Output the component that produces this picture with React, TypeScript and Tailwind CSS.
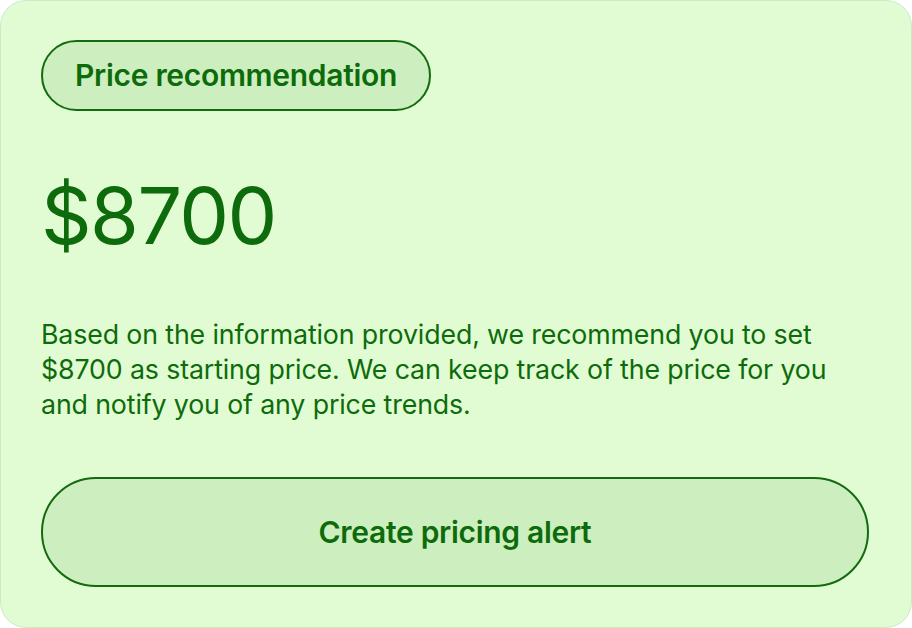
export default function App() {
  return (
    <div className="w-[912px] h-[628px] bg-white" style={{ fontFamily: "Inter, 'Noto Sans', sans-serif" }}>
      <div className="h-full rounded-[26px] border border-[#cfe8c3] bg-[#e1fcd3] pl-10 pr-[42px] pt-[39px] pb-10 flex flex-col text-[#0e6b0b]">
        <div className="flex">
          <span className="h-[71px] px-8 flex items-center rounded-full border-2 border-[#136a0f] bg-[#cdefbf] text-[30px] font-semibold tracking-[-0.01em]">
            Price recommendation
          </span>
        </div>
        <p className="mt-[64px] text-[79px] leading-[80px] tracking-[-0.02em]">$8700</p>
        <p className="mt-[62px] text-[26.75px] leading-[35px] tracking-[-0.005em]">
          Based on the information provided, we recommend you to set $8700 as starting price. We can keep track of the
          price for you and notify you of any price trends.
        </p>
        <button className="mt-auto h-[110px] w-full rounded-full border-2 border-[#136a0f] bg-[#cdefbf] text-[30px] font-semibold tracking-[-0.01em]">
          Create pricing alert
        </button>
      </div>
    </div>
  );
}
